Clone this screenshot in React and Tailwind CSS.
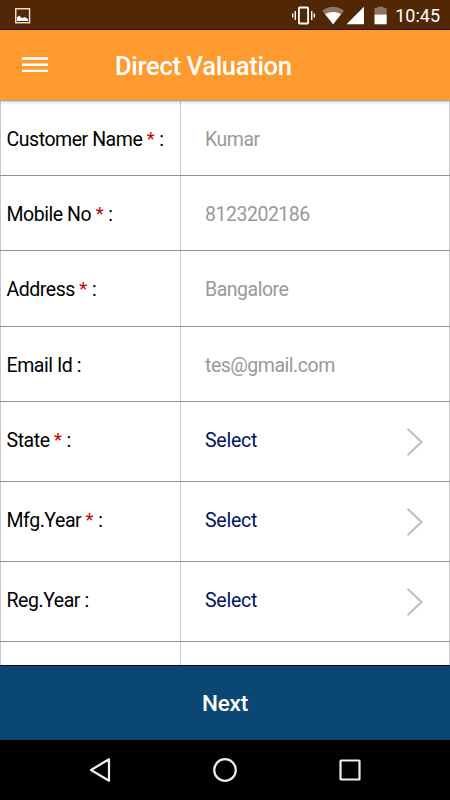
import { useState } from 'react'

const FIELDS = [
  { label: 'Customer Name', required: true, value: 'Kumar', height: 'h-[75px]' },
  { label: 'Mobile No', required: true, value: '8123202186', height: 'h-[75px]' },
  { label: 'Address', required: true, value: 'Bangalore', height: 'h-[76px]' },
  { label: 'Email Id', required: false, value: 'tes@gmail.com', height: 'h-[75px]' },
]

const SELECTS = [
  { label: 'State', required: true },
  { label: 'Mfg.Year', required: true },
  { label: 'Reg.Year', required: false },
]

function StatusBar() {
  return (
    <div className="h-[30px] shrink-0 bg-[#522705] border-b border-[#2b1402] flex items-center justify-between text-white">
      <svg className="ml-[15px] mt-[2px]" width="16" height="16" viewBox="0 0 16 16">
        <rect x="0.75" y="0.75" width="13.8" height="14" fill="none" stroke="#eee4dd" strokeWidth="1.4" />
        <path d="M2 13V9.500L4 7.500L6 9.500L7.500 10L9.500 9L13 11V13Z" fill="#fff" />
      </svg>
      <div className="flex items-center mr-[10px]">
        <svg width="95" height="20" viewBox="292 4.5 95 20">
          <rect x="298.9" y="7" width="9.2" height="16" rx="0.8" fill="none" stroke="#fff" strokeWidth="1.8" />
          <path d="M292.7 13V17M295.3 10.5V19.5M311.7 10.5V19.5M314.3 13V17" stroke="#fff" strokeWidth="1.4" />
          <path d="M322.2 10.3Q333 2.2 344 10.3L333.1 23.8Z" fill="#91765f" />
          <path d="M325 13.6Q333 9.5 341.2 13.6L333.1 23.8Z" fill="#fff" />
          <path d="M346.5 23.8H364V6.3Z" fill="#fff" />
          <path d="M374.5 7.6H377.5V6.3H383.5V7.6H386.7V14H374.5Z" fill="#91765f" />
          <path d="M374.5 14H386.7V23.8H374.5Z" fill="#fff" />
        </svg>
        <span className="ml-2 pt-[3px] text-[18px] leading-none">10:45</span>
      </div>
    </div>
  )
}

function Label({ text, required }) {
  return (
    <div className="w-[181px] shrink-0 border-x border-[#c9c9c9] pl-[5.5px] flex items-center whitespace-pre text-[19.5px] tracking-[-0.45px] text-black">
      {text} {required && <span className="text-[18.5px] tracking-normal text-[#c40000]">* </span>}:
    </div>
  )
}

export default function App() {
  const [form, setForm] = useState(() => FIELDS.map((f) => f.value))

  function handleChange(index, value) {
    setForm(form.map((v, i) => (i === index ? value : v)))
  }

  return (
    <div className="w-[450px] h-[800px] flex flex-col overflow-hidden bg-white font-[Roboto,sans-serif] text-[19.5px]">
      <StatusBar />
      <header className="relative z-10 h-[70px] shrink-0 bg-[#ff9a2e] flex items-center shadow-[0_1px_0_#9da5a8,0_2px_3px_rgba(0,0,0,0.25)]">
        <button className="ml-[22px] w-[26px]" aria-label="Menu">
          <svg className="block" width="26" height="16" viewBox="0 0 26 16" stroke="#fff" strokeWidth="2.4">
            <path d="M0 1.5H26M0 7.700H26M0 13.900H26" />
          </svg>
        </button>
        <h1 className="ml-[67px] pt-[2px] text-[25.5px] tracking-[-0.3px] font-medium text-white">Direct Valuation</h1>
      </header>

      <main className="flex-1 min-h-0 overflow-hidden pt-px flex flex-col">
        {FIELDS.map((f, i) => (
          <div key={f.label} className={`${f.height} shrink-0 flex border-b border-[#929292] *:pt-[3px]`}>
            <Label text={f.label} required={f.required} />
            <div className="flex-1 flex items-center border-r border-[#c9c9c9] pl-6">
              <input
                value={form[i]}
                onChange={(e) => handleChange(i, e.target.value)}
                className="w-full bg-transparent tracking-[-0.48px] text-[#999999] outline-none"
              />
            </div>
          </div>
        ))}
        {SELECTS.map((s) => (
          <div key={s.label} className="h-[80px] shrink-0 flex border-b border-[#929292] *:pb-[2px]">
            <Label text={s.label} required={s.required} />
            <button className="flex-1 flex items-center justify-between border-r border-[#c9c9c9] pl-6 pr-[25px] tracking-[-0.25px] text-[#00145f]">
              Select
              <svg className="mt-[2px]" width="18" height="30" viewBox="0 0 18 30" fill="none" stroke="#c0c0c0" strokeWidth="2.2">
                <path d="M1.5 1.7L15.5 15L1.5 28.3" />
              </svg>
            </button>
          </div>
        ))}
        <div className="h-[80px] shrink-0 flex">
          <div className="w-[181px] border-x border-[#c9c9c9]" />
          <div className="flex-1 border-r border-[#c9c9c9]" />
        </div>
      </main>

      <button className="h-[75px] shrink-0 border-t border-[#00063c] bg-[#0a4773] pt-[2px] text-white text-[22.5px] tracking-[-0.2px] font-medium">
        Next
      </button>

      <nav className="h-[60px] shrink-0 bg-black">
        <svg width="450" height="60" viewBox="0 740 450 60" fill="none" stroke="#eeeeee" strokeWidth="2.2" strokeLinejoin="round">
          <path d="M109 759.200V780.800L91 770Z" />
          <circle cx="225" cy="770" r="10.800" />
          <rect x="340.500" y="760.500" width="19" height="19" rx="0.500" />
        </svg>
      </nav>
    </div>
  )
}
